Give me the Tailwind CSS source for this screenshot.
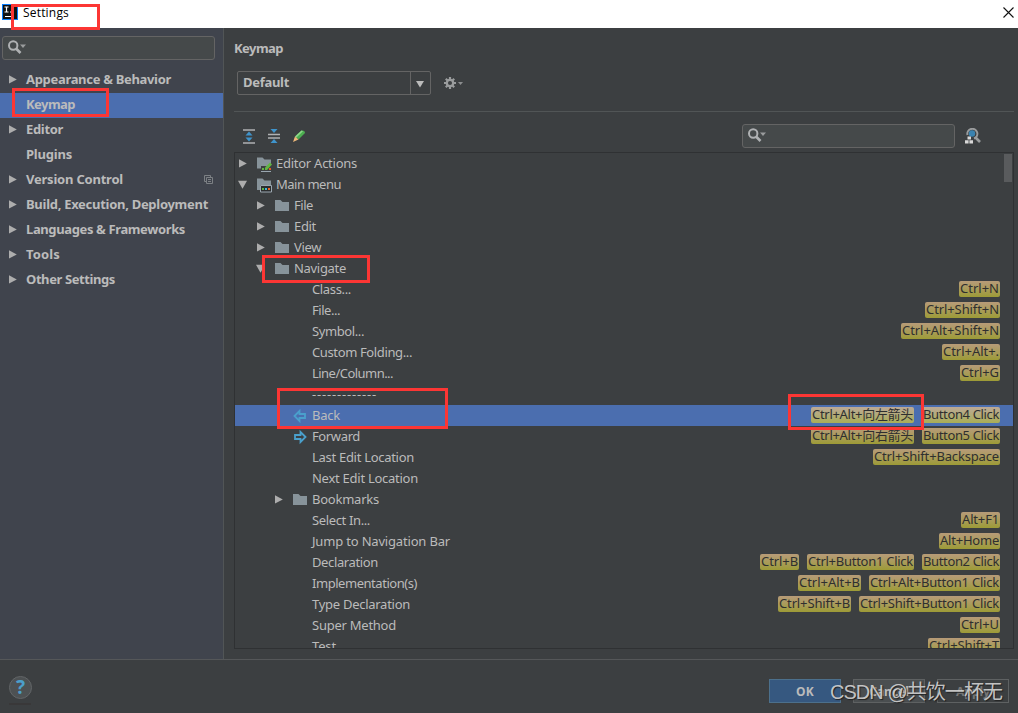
<!DOCTYPE html>
<html lang="en">
<head>
    <meta charset="UTF-8">
    <meta name="viewport" content="width=device-width, initial-scale=1.0">
    <title>Settings</title>
    <script src="https://cdn.jsdelivr.net/npm/@tailwindcss/browser@4"></script>
</head>
<body class="relative w-[1018px] h-[713px] overflow-hidden bg-[#3c3f41] text-[#bbbbbb] text-[13px] font-['Noto_Sans','Noto_Sans_CJK_SC',sans-serif]">

<!-- Shared icons -->
<svg class="hidden">
    <symbol id="search" viewBox="0 0 20 16">
        <circle cx="5.200" cy="5.500" r="4.200" fill="none" stroke="#afb1b3" stroke-width="2"/>
        <path d="M8 8.500l4.500 4.500" stroke="#afb1b3" stroke-width="2.600"/>
        <path d="M12 4.500h6l-3 3.500z" fill="#9a9c9d"/>
    </symbol>
    <symbol id="folder" viewBox="0 0 16 16">
        <path d="M1 2h5.500l2 2H15v9H1z" fill="#87939a"/>
    </symbol>
    <symbol id="folder-edit" viewBox="0 0 16 16">
        <path d="M1 1.500h5.500l2 2H15v4l-5 5H1z" fill="#87939a"/>
        <path d="M5 10h10v5H5z" fill="#3c3f41"/>
        <path d="M5 15.500h10" stroke="#9aa7b0"/>
        <path d="M6 12h2v2H6z" fill="#62b543"/>
        <path d="M13 12h2v2h-2z" fill="#e05d23"/>
        <path d="M9 14v-2.500l5-5 2 2-5 5.500z" fill="#62b543"/>
    </symbol>
    <symbol id="folder-menu" viewBox="0 0 16 16">
        <path d="M1 1.500h5.500l2 2H15V8H4v5H1z" fill="#87939a"/>
        <path d="M4.500 8.500h11v6.500h-11z" fill="#2b2d2e" stroke="#9aa7b0"/>
        <path d="M6 11h2v2H6z" fill="#62b543"/>
        <path d="M9 11h2v2H9z" fill="#40b6e0"/>
        <path d="M12 11h2v2h-2z" fill="#f26522"/>
    </symbol>
    <symbol id="back" viewBox="0 0 16 16">
        <path d="M2.500 8L7.500 3V6H13V10H7.500V13z" fill="none" stroke="#4aa0cc" stroke-width="1.800"/>
    </symbol>
    <symbol id="forward" viewBox="0 0 16 16">
        <path d="M13.500 8L8.500 3V6H3V10H8.500V13z" fill="none" stroke="#4aa0cc" stroke-width="1.800"/>
    </symbol>
    <symbol id="closed" viewBox="0 0 9 9">
        <path d="M1 .3v8.200l7.800-4.100z" fill="#adadad"/>
    </symbol>
    <symbol id="open" viewBox="0 0 9 9">
        <path d="M0 .8h9L4.500 8.800z" fill="#adadad"/>
    </symbol>
</svg>

<div class="flex flex-col h-full">
    <!-- Title bar -->
    <header class="flex h-7 shrink-0 bg-white text-black font-['Open_Sans',sans-serif]">
        <svg class="w-4 h-4 mt-1 ml-0.5" viewBox="0 0 16 16">
            <path d="M0 0h16v16H0z" fill="#087cfa"/>
            <path d="M1 1h14v14H1z" fill="#111"/>
            <path d="M2.500 3h4M4.500 3v5M2.500 8h4M8 8h2M3 12.500h6" stroke="#fff" stroke-width="1.200"/>
        </svg>
        <span class="ml-[5px] mt-1 leading-[18px] text-xs"><span data-width="46">Settings</span></span>
        <svg class="ml-auto mt-[7px] mr-1 w-[11px] h-[11px]" viewBox="0 0 11 11" stroke="#111" stroke-width="1.100"><path d="M.5.5l10 10M10.500.5l-10 10"/></svg>
    </header>

    <div class="flex flex-1 min-h-0">
        <!-- Categories -->
        <aside class="w-[224px] shrink-0 bg-[#40444d] border-r border-[#515556] pt-2">
            <div class="ml-0.5 w-[213px] h-6 rounded-[3px] border border-[#646464] bg-[#45494a] pl-[5px] pt-[3px]">
                <svg class="w-5 h-4"><use href="#search"/></svg>
            </div>
            <nav id="categories" class="mt-2 font-bold"></nav>
        </aside>

        <!-- Keymap page -->
        <main class="flex-1 min-w-0 pl-[10px] pr-1 flex flex-col">
            <h1 class="mt-[11px] h-[18px] leading-[18px] font-bold"><span data-width="49">Keymap</span></h1>
            <div class="flex items-center mt-[14px] ml-[3px] h-6">
                <div class="flex w-[194px] h-6 rounded-[2px] border border-[#646464]">
                    <div class="w-[173px] border-r border-[#646464] pl-[5px] leading-[21px] font-bold"><span data-width="46">Default</span></div>
                    <svg class="w-[9px] h-[9px] ml-[5px] mt-2" viewBox="0 0 9 9"><path d="M0 1h8L4 7.500z" fill="#bbb"/></svg>
                </div>
                <svg class="w-5 h-3.5 ml-[13px]" viewBox="0 0 20 14">
                    <path d="M6 1v12M0 7h12M1.800 2.800l8.400 8.400M10.200 2.800l-8.400 8.400" stroke="#9a9c9d" stroke-width="2.200"/>
                    <circle cx="6" cy="7" r="3.200" fill="#3c3f41" stroke="#9a9c9d" stroke-width="2.300"/>
                    <path d="M14 6h5l-2.500 3z" fill="#8c8e8f"/>
                </svg>
            </div>
            <div class="mt-4 h-px shrink-0 bg-[#515556]"></div>

            <!-- Toolbar -->
            <div class="flex h-10 shrink-0 pt-3 pl-[7px]">
                <svg class="w-4 h-4 mt-1" viewBox="0 0 16 16">
                    <path d="M2 2h12M2 15h12" stroke="#afb1b3" stroke-width="1.600"/>
                    <path d="M8 3.500l3.500 4h-7zM8 13.500l3.500-4h-7z" fill="#3f94cc"/>
                </svg>
                <svg class="w-4 h-4 mt-1 ml-[9px]" viewBox="0 0 16 16">
                    <path d="M2 6.500h12M2 10h12" stroke="#afb1b3" stroke-width="1.600"/>
                    <path d="M8 5l3.500-4h-7zM8 11l3.500 4h-7z" fill="#3f94cc"/>
                </svg>
                <svg class="w-4 h-4 mt-1 ml-[9px]" viewBox="0 0 16 16">
                    <path d="M4 8.500L10.500 2.500Q14 2 14 5L7.500 11.500z" fill="#4cae50"/>
                    <path d="M4 8.500L10.500 2.500L12 3.200L5.200 9.800z" fill="#8ed68a"/>
                    <path d="M4 8.500L7.500 11.500L2 14z" fill="#edb879"/>
                </svg>
                <div class="ml-[435px] w-[213px] h-6 rounded-[3px] border border-[#646464] bg-[#45494a] pl-[5px] pt-[3px]">
                    <svg class="w-5 h-4"><use href="#search"/></svg>
                </div>
                <svg class="w-4 h-4 ml-[10px] mt-1" viewBox="0 0 16 16">
                    <path d="M2.500 7a5 5 0 1 1 6.500 3.500" fill="none" stroke="#9a9c9d" stroke-width="2"/>
                    <circle cx="7" cy="5.500" r="3.200" fill="#3b83b0"/>
                    <path d="M10.500 9.500l4.500 4.500" stroke="#9a9c9d" stroke-width="2.600"/>
                    <path d="M2.500 8.500h3.500v3h-3.500zM0 12.300h3.600v3.200H0zM4.400 12.300H8v3.200H4.400z" fill="#d8d8d8"/>
                </svg>
            </div>

            <!-- Action tree -->
            <div class="relative h-[497px] border border-[#2f3133] overflow-hidden">
                <div id="tree"></div>
                <div class="absolute right-px top-px w-2 h-7 bg-[#595b5d]"></div>
            </div>
        </main>
    </div>

    <!-- Buttons -->
    <footer class="flex h-[54px] shrink-0 border-t border-[#555759] pl-[9px] pt-4">
        <div>
            <div class="flex items-center justify-center w-[23px] h-[23px] rounded-full border border-[#626567] bg-[#4d5153] text-[#4b9fcb] text-[19px] leading-none font-bold">?</div>
            <div class="mt-1 w-[22px] h-0.5 bg-[#393839]"></div>
        </div>
        <div class="ml-auto mr-[9px] mt-[3px] flex gap-3 font-bold text-xs leading-[23px] text-center">
            <div class="w-[72px] h-6 border border-[#4c708c] bg-[#365880]"><span data-width="18">OK</span></div>
            <div class="w-[72px] h-6 border border-[#5e6162] bg-[#4a4e50]">Cancel</div>
            <div class="w-[72px] h-6 border border-[#5e6162] text-[#777777]">Apply</div>
        </div>
    </footer>
</div>

<!-- Highlight frames -->
<div class="absolute left-[11px] top-1 w-[89px] h-[26px] border-3 border-[#fc3634]"></div>
<div class="absolute left-3 top-[88px] w-[97px] h-[29px] border-3 border-[#fc3634]"></div>
<div class="absolute left-[262px] top-[255px] w-[108px] h-7 border-3 border-[#fc3634]"></div>
<div class="absolute left-[277px] top-[388px] w-[171px] h-[41px] border-3 border-[#fc3634]"></div>
<div class="absolute left-[788px] top-[394px] w-[136px] h-9 border-3 border-[#fc3634]"></div>

<!-- Watermark -->
<div class="absolute left-[830px] top-[678px] leading-7 text-[20px] whitespace-nowrap text-[#d6d6d6]/90 [text-shadow:1px_1px_1px_#222] font-['Liberation_Sans','Noto_Sans_CJK_SC',sans-serif]"><span data-width="172">CSDN @共饮一杯无</span></div>

<script>
    // [label, label width, has children]
    const categories = [
        ['Appearance &amp; Behavior', 145, true],
        ['Keymap', 49, false],
        ['Editor', 37, true],
        ['Plugins', 46, false],
        ['Version Control', 97, true],
        ['Build, Execution, Deployment', 182, true],
        ['Languages &amp; Frameworks', 159, true],
        ['Tools', 34, true],
        ['Other Settings', 89, true]
    ];

    // [indent, arrow, icon, label, label width, shortcuts]
    const actions = [
        [3, 'closed', 'folder-edit', 'Editor Actions', 81, []],
        [3, 'open', 'folder-menu', 'Main menu', 65, []],
        [21, 'closed', 'folder', 'File', 19, []],
        [21, 'closed', 'folder', 'Edit', 22, []],
        [21, 'closed', 'folder', 'View', 27, []],
        [21, 'open', 'folder', 'Navigate', 52, []],
        [39, '', '', 'Class...', 39, [['Ctrl+N', 41]]],
        [39, '', '', 'File...', 28, [['Ctrl+Shift+N', 75]]],
        [39, '', '', 'Symbol...', 52, [['Ctrl+Alt+Shift+N', 99]]],
        [39, '', '', 'Custom Folding...', 100, [['Ctrl+Alt+.', 58]]],
        [39, '', '', 'Line/Column...', 81, [['Ctrl+G', 40]]],
        [39, '', '', '-------------', 65, []],
        [39, '', 'back', 'Back', 28, [['Ctrl+Alt+向左箭头', 103], ['Button4 Click', 78]]],
        [39, '', 'forward', 'Forward', 48, [['Ctrl+Alt+向右箭头', 103], ['Button5 Click', 78]]],
        [39, '', '', 'Last Edit Location', 102, [['Ctrl+Shift+Backspace', 127]]],
        [39, '', '', 'Next Edit Location', 106, []],
        [39, 'closed', 'folder', 'Bookmarks', 67, []],
        [39, '', '', 'Select In...', 58, [['Alt+F1', 39]]],
        [39, '', '', 'Jump to Navigation Bar', 138, [['Alt+Home', 61]]],
        [39, '', '', 'Declaration', 66, [['Ctrl+B', 39], ['Ctrl+Button1 Click', 107], ['Button2 Click', 78]]],
        [39, '', '', 'Implementation(s)', 105, [['Ctrl+Alt+B', 63], ['Ctrl+Alt+Button1 Click', 131]]],
        [39, '', '', 'Type Declaration', 98, [['Ctrl+Shift+B', 73], ['Ctrl+Shift+Button1 Click', 141]]],
        [39, '', '', 'Super Method', 84, [['Ctrl+U', 40]]],
        [39, '', '', 'Test', 24, [['Ctrl+Shift+T', 72]]]
    ];

    document.getElementById('categories').innerHTML = categories.map(([label, width, parent]) => `
        <div class="flex items-center h-[25px] pl-2 ${label === 'Keymap' ? 'bg-[#4b6eaf]' : ''}">
            <svg class="w-[9px] h-[9px] mr-[9px] -mt-0.5">${parent ? '<use href="#closed"/>' : ''}</svg>
            <span class="whitespace-nowrap leading-[22px] -mt-[3px]"><span data-width="${width}">${label}</span></span>
            ${label === 'Version Control' ? `
            <svg class="w-[9px] h-[9px] ml-auto mr-[10px] -mt-0.5" viewBox="0 0 9 9" fill="none" stroke="#7c8084">
                <path d="M2.500 6.500h-2v-6h6v2M2.500 2.500h6v6h-6zM4 4.500h3M4 6.500h3"/>
            </svg>` : ''}
        </div>`).join('');

    document.getElementById('tree').innerHTML = actions.map(([indent, arrow, icon, label, width, keys]) => `
        <div class="flex items-center h-[21px] pr-[13px] ${label === 'Back' ? 'bg-[#4b6eaf]' : ''}" style="padding-left:${indent}px">
            <svg class="w-[9px] h-[9px] mr-[9px] shrink-0">${arrow ? `<use href="#${arrow}"/>` : ''}</svg>
            <svg class="w-4 h-4 mr-1 shrink-0 mt-px">${icon ? `<use href="#${icon}"/>` : ''}</svg>
            <span class="whitespace-nowrap leading-[21px]"><span data-width="${width}">${label}</span></span>
            <div class="ml-auto flex gap-2 -mt-px">
                ${keys.map(([key, w]) => `
                <kbd class="h-4 px-px rounded-[2px] whitespace-nowrap leading-[15px] text-[13px] text-[#2f2f2f] font-['Noto_Sans','Noto_Sans_CJK_SC',sans-serif] bg-linear-to-b ${label === 'Back' ? 'from-[#bda996] to-[#a9ad55]' : 'from-[#b79b78] to-[#9d9b35]'}" style="width:${w}px"><span data-width="${w - 2}">${key}</span></kbd>`).join('')}
            </div>
        </div>`).join('');

    // Track each label out to its own width
    window.addEventListener('load', function() {
        document.querySelectorAll('[data-width]').forEach(el => {
            const spare = Number(el.dataset.width) - el.getBoundingClientRect().width;
            el.style.letterSpacing = spare / el.textContent.length + 'px';
        });
    });
</script>

</body>
</html>
